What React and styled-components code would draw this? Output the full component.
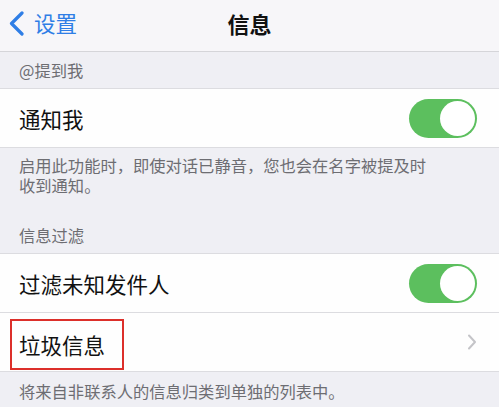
import React from 'react'
import styled, { createGlobalStyle } from 'styled-components'

const Global = createGlobalStyle`
  html, body {
    margin: 0;
    padding: 0;
    background: #efeff4;
    font-family: "Noto Sans CJK SC", "Noto Sans", sans-serif;
  }
`

const Page = styled.div`
  width: 499px;
  height: 407px;
  overflow: hidden;
  background: #efeff4;
`

const NavBar = styled.header`
  height: 52px;
  box-sizing: border-box;
  padding-bottom: 6px;
  display: grid;
  grid-template-columns: 1fr auto 1fr;
  align-items: center;
  background: #f7f6f9;
  border-bottom: 1px solid #d5d5d9;
`

const Back = styled.div`
  display: flex;
  align-items: center;
  gap: 9px;
  padding-left: 8px;
  color: #2f7ee6;
  font-size: 21.5px;
  svg {
    display: block;
    margin-top: 2px;
  }
`

const Title = styled.h1`
  margin: 0;
  font-size: 22px;
  font-weight: 700;
  color: #111;
`

const GroupLabel = styled.div`
  height: ${(p) => p.$h}px;
  box-sizing: border-box;
  display: flex;
  align-items: flex-end;
  padding: 0 19px 8px;
  font-size: 16.3px;
  line-height: 20px;
  color: #6d6d72;
  border-bottom: 1px solid #dcdce0;
`

const Row = styled.div`
  height: 59px;
  box-sizing: border-box;
  display: flex;
  align-items: center;
  justify-content: space-between;
  padding: 0 22px 0 19px;
  background: #fefefe;
  border-bottom: 1px solid #dcdce0;
`

const RowText = styled.span`
  font-size: 21.5px;
  color: #111;
  ${(p) =>
    p.$boxed &&
    `
    display: flex;
    align-items: center;
    height: 51px;
    box-sizing: border-box;
    margin: 5px 0 0 -9px;
    padding: 0 17px 0 7px;
    border: 2px solid #dc2f2a;
  `}
`

const Switch = styled.div`
  width: 68px;
  height: 39px;
  border-radius: 20px;
  background: #5cbf5e;
  box-sizing: border-box;
  padding: 2px;
  display: flex;
  justify-content: flex-end;
  &::after {
    content: '';
    width: 35px;
    height: 35px;
    border-radius: 50%;
    background: #fff;
  }
`

const Note = styled.p`
  margin: 0;
  padding: ${(p) => p.$pad};
  font-size: 16.3px;
  line-height: 20px;
  color: #6d6d72;
`

const Chevron = () => (
  <svg width="10" height="16" viewBox="0 0 10 16">
    <path d="M2 1.5 L8 8 L2 14.5" fill="none" stroke="#c4c4c8" strokeWidth="2" strokeLinecap="round" strokeLinejoin="round" />
  </svg>
)

export default function App() {
  return (
    <Page>
      <Global />
      <NavBar>
        <Back>
          <svg width="17" height="25" viewBox="0 0 17 25">
            <path d="M14 2 L3.5 12.5 L14 23" fill="none" stroke="#2f7ee6" strokeWidth="3.2" strokeLinecap="round" strokeLinejoin="round" />
          </svg>
          设置
        </Back>
        <Title>信息</Title>
        <div />
      </NavBar>
      <GroupLabel $h={37}>@提到我</GroupLabel>
      <Row>
        <RowText>通知我</RowText>
        <Switch />
      </Row>
      <Note $pad="7px 19px 0">
        启用此功能时，即使对话已静音，您也会在名字被提及时
        <br />
        收到通知。
      </Note>
      <GroupLabel $h={59}>信息过滤</GroupLabel>
      <Row>
        <RowText>过滤未知发件人</RowText>
        <Switch />
      </Row>
      <Row>
        <RowText $boxed>垃圾信息</RowText>
        <Chevron />
      </Row>
      <Note $pad="9px 19px 0">将来自非联系人的信息归类到单独的列表中。</Note>
    </Page>
  )
}
